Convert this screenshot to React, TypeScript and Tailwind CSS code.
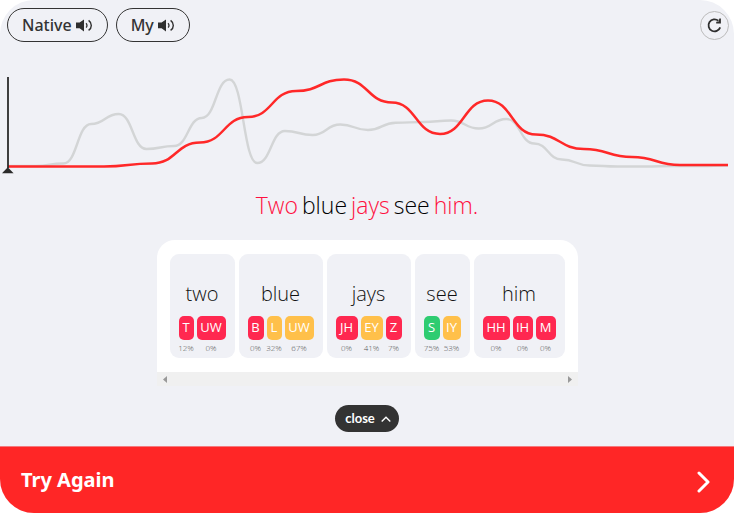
const MY_LEVELS = [166.5, 166.5, 166.5, 163.5, 142.5, 117, 91, 79.5, 102.5, 134, 100.5, 134.5, 149, 157, 165, 165];
const NATIVE_LEVELS = [
  166, 166, 163.5, 124, 114, 149, 146, 118, 79.5, 163, 131, 135, 124.5, 130, 122.7, 122, 120.5,
  128.5, 119, 143.5, 159.5, 165.5, 166.5, 166.5, 166, 166, 165.5,
];

const TONES = {
  bad: 'bg-[#ff2850]',
  fair: 'bg-[#ffc04a]',
  good: 'bg-[#2ecc71]',
};

type Phone = { label: string; score: number; tone: keyof typeof TONES; size: string };
type Word = { text: string; phones: Phone[] };

const WORDS: Word[] = [
  {
    text: 'two',
    phones: [
      { label: 'T', score: 12, tone: 'bad', size: 'w-[15px]' },
      { label: 'UW', score: 0, tone: 'bad', size: 'w-[29px]' },
    ],
  },
  {
    text: 'blue',
    phones: [
      { label: 'B', score: 0, tone: 'bad', size: 'w-4' },
      { label: 'L', score: 32, tone: 'fair', size: 'w-[15px]' },
      { label: 'UW', score: 67, tone: 'fair', size: 'w-[29px]' },
    ],
  },
  {
    text: 'jays',
    phones: [
      { label: 'JH', score: 0, tone: 'bad', size: 'w-[22px]' },
      { label: 'EY', score: 41, tone: 'fair', size: 'w-[22px]' },
      { label: 'Z', score: 7, tone: 'bad', size: 'w-4' },
    ],
  },
  {
    text: 'see',
    phones: [
      { label: 'S', score: 75, tone: 'good', size: 'w-4' },
      { label: 'IY', score: 53, tone: 'fair', size: 'w-[18px]' },
    ],
  },
  {
    text: 'him',
    phones: [
      { label: 'HH', score: 0, tone: 'bad', size: 'w-[27px]' },
      { label: 'IH', score: 0, tone: 'bad', size: 'w-5' },
      { label: 'M', score: 0, tone: 'bad', size: 'w-5' },
    ],
  },
];

const SENTENCE = [
  { text: 'Two', missed: true },
  { text: 'blue', missed: false },
  { text: 'jays', missed: true },
  { text: 'see', missed: false },
  { text: 'him.', missed: true },
];

function smoothPath(levels: number[]) {
  const step = 720 / (levels.length - 1);
  return levels
    .map((y, i) => {
      const x = 8 + i * step;
      if (i === 0) return `M${x} ${y}`;
      const mid = x - step / 2;
      return `C${mid} ${levels[i - 1]} ${mid} ${y} ${x} ${y}`;
    })
    .join(' ');
}

function Speaker() {
  return (
    <svg width="17" height="14" viewBox="0 0 17 14" fill="none" aria-hidden="true">
      <path d="M0 4.6h3.6L8 1.4v12l-4.4-3.2H0z" fill="#2f2f2f" />
      <path d="M10 5.2c1.300 1 1.300 3.400 0 4.400" stroke="#2f2f2f" strokeWidth="1.3" />
      <path d="M12.600 2.400c3.600 2.600 3.600 7.400 0 10" stroke="#2f2f2f" strokeWidth="1.4" />
    </svg>
  );
}

function PlayButton({ label }: { label: string }) {
  return (
    <button
      type="button"
      className="flex h-[34px] items-center gap-1 rounded-full border border-[#333] px-3.5 font-['Noto_Sans',sans-serif] text-base font-medium text-[#333]"
    >
      {label}
      <Speaker />
    </button>
  );
}

function WordCard({ word }: { word: Word }) {
  return (
    <li className="flex h-[104px] flex-col items-center rounded-[9px] bg-[#f0f1f6] px-[9px] pt-6">
      <span className="text-xl leading-8 font-light text-[#111]">{word.text}</span>
      <div className="mt-1.5 flex gap-[3px]">
        {word.phones.map((p, i) => (
          <div key={i} className="flex flex-col items-center">
            <span
              className={`flex h-6 items-center justify-center rounded-[5px] text-[13px] text-white ${TONES[p.tone]} ${p.size}`}
            >
              {p.label}
            </span>
            <span className="mt-0.5 flex w-0 justify-center text-[8px] leading-3 font-light text-[#555]">
              {p.score}%
            </span>
          </div>
        ))}
      </div>
    </li>
  );
}

export default function App() {
  return (
    <div className="bg-white pr-px font-['Open_Sans',sans-serif]">
      <main className="flex flex-col overflow-hidden rounded-[34px] bg-[#f0f1f6]">
        <header className="flex items-center justify-between pt-2 pr-[5px] pl-[7px]">
          <div className="flex gap-2">
            <PlayButton label="Native" />
            <PlayButton label="My" />
          </div>
          <button
            type="button"
            aria-label="Restart"
            className="flex size-[29px] items-center justify-center rounded-full border border-[#bbb]"
          >
            <svg width="15" height="15" viewBox="0 0 15 15" fill="none" aria-hidden="true">
              <path d="M13.2 9.4A6 6 0 1 1 11.4 2.8" stroke="#2f2f2f" strokeWidth="1.8" />
              <path d="M13.9.6v4.800H9.200V3.800l2.500-.2.600-3z" fill="#2f2f2f" />
            </svg>
          </button>
        </header>

        <svg
          viewBox="0 70 734 110"
          className="mt-7 w-full"
          fill="none"
          role="img"
          aria-label="Native and recorded loudness"
        >
          <path d={smoothPath(NATIVE_LEVELS)} stroke="#d3d5d6" strokeWidth="2.4" />
          <path d={smoothPath(MY_LEVELS)} stroke="#ff2828" strokeWidth="2.5" />
          <path d="M8 77v91" stroke="#2b2b2b" strokeWidth="1.8" />
          <path d="M2 173.2l5.8-6 5.8 6z" fill="#2b2b2b" />
        </svg>

        <h1 className="mt-[7px] flex justify-center gap-1 text-[23px] leading-9 font-light">
          {SENTENCE.map((w) => (
            <span key={w.text} className={w.missed ? 'text-[#ff1040]' : 'text-black'}>
              {w.text}
            </span>
          ))}
        </h1>

        <section aria-label="Sounds" className="mt-[17px] self-center">
          <ul className="flex gap-1 rounded-t-[18px] bg-white px-[13px] py-3.5">
            {WORDS.map((w) => (
              <WordCard key={w.text} word={w} />
            ))}
          </ul>
          <div className="flex h-3.5 items-center justify-between bg-[#f0f0f0] px-1.5" aria-hidden="true">
            <svg width="4" height="7" viewBox="0 0 4 7">
              <path d="M4 0v7L0 3.5z" fill="#999" />
            </svg>
            <svg width="4" height="7" viewBox="0 0 4 7">
              <path d="M0 0v7l4-3.5z" fill="#999" />
            </svg>
          </div>
        </section>

        <button
          type="button"
          className="mt-[19px] flex h-[27px] items-center gap-1.5 self-center rounded-full bg-[#333] pr-2 pl-2.5 font-['Lato',sans-serif] text-[13px] font-bold text-white"
        >
          close
          <svg width="10" height="6" viewBox="0 0 10 6" fill="none" aria-hidden="true">
            <path d="M.7 5.5L5 1.2l4.3 4.3" stroke="#fff" strokeWidth="1.4" />
          </svg>
        </button>

        <button
          type="button"
          className="mt-3.5 flex h-[67px] items-center justify-between border-t border-[#f47a7e] bg-[#ff2626] pr-6 pl-[21px] font-['Noto_Sans',sans-serif] text-xl font-bold text-white"
        >
          Try Again
          <svg width="13" height="22" viewBox="0 0 13 22" fill="none" className="mt-1" aria-hidden="true">
            <path d="M2 2l9 9-9 9" stroke="#fff" strokeWidth="3" strokeLinecap="round" strokeLinejoin="round" />
          </svg>
        </button>
      </main>
    </div>
  );
}
